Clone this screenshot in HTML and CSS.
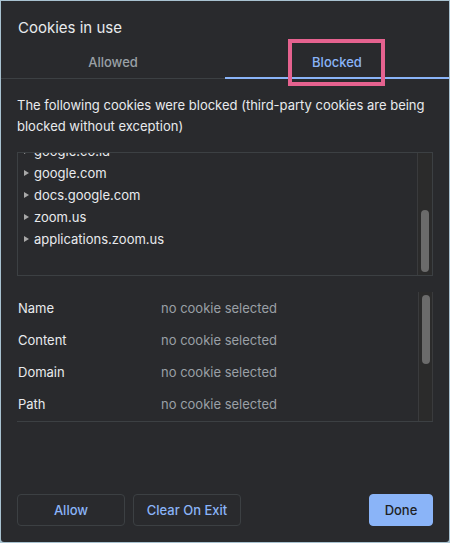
FILE: index.html
```html
<!DOCTYPE html>
<html lang="en">
<head>
    <meta charset="UTF-8">
    <title>Cookies in use</title>
    <link rel="stylesheet" href="styles.css">
</head>
<body>
    <div class="dialog">
        <h1 class="title">Cookies in use</h1>

        <div class="tabs">
            <div class="tab">Allowed</div>
            <div class="tab active">Blocked</div>
        </div>
        <div class="highlight"></div>

        <p class="desc">The following cookies were blocked (third-party cookies are being blocked without exception)</p>

        <div class="tree">
            <div class="tree-list">
                <div class="tree-inner">
                    <div class="node"><span class="arrow"></span>google.co.id</div>
                    <div class="node"><span class="arrow"></span>google.com</div>
                    <div class="node"><span class="arrow"></span>docs.google.com</div>
                    <div class="node"><span class="arrow"></span>zoom.us</div>
                    <div class="node"><span class="arrow"></span>applications.zoom.us</div>
                </div>
            </div>
            <div class="track tree-track"><div class="thumb"></div></div>
        </div>

        <div class="details">
            <div class="detail-rows">
                <div class="row"><span class="label">Name</span><span class="value">no cookie selected</span></div>
                <div class="row"><span class="label">Content</span><span class="value">no cookie selected</span></div>
                <div class="row"><span class="label">Domain</span><span class="value">no cookie selected</span></div>
                <div class="row"><span class="label">Path</span><span class="value">no cookie selected</span></div>
            </div>
            <div class="track details-track"><div class="thumb"></div></div>
        </div>

        <div class="buttons">
            <button class="btn">Allow</button>
            <button class="btn">Clear On Exit</button>
            <button class="btn primary">Done</button>
        </div>
    </div>
</body>
</html>
```

FILE: styles.css
```css
body { margin: 0; background: #a8c2d0; font-family: Inter, "Noto Sans", sans-serif; }
.dialog { position: relative; margin: 1px 1px 0; height: 541px; background: #292a2d; border-radius: 0 0 3px 3px; display: flex; flex-direction: column; color: #e8eaed; }

.title { margin: 17px 0 0 17px; font-size: 15px; line-height: 20px; font-weight: 400; }

.tabs { display: grid; grid-template-columns: 1fr 1fr; align-items: end; margin-top: 9px; }
.tab { text-align: center; font-size: 13px; font-weight: 500; line-height: 20px; padding: 5px 0 6px; color: #9aa0a6; border-bottom: 1px solid #3c4043; }
.tab.active { color: #8ab4f8; padding-bottom: 5px; border-bottom: 2px solid #8ab4f8; }
.highlight { position: absolute; left: 287px; top: 38px; width: 89px; height: 39px; border: 4px solid #e5628f; }

.desc { margin: 16px 16px 0; font-size: 13px; line-height: 21px; }

.tree { display: flex; margin: 15px 16px 0; height: 122px; border: 1px solid #3c4043; }
.tree-list { flex: 1; overflow: hidden; }
.tree-inner { margin-top: -13px; }
.node { height: 22px; line-height: 22px; font-size: 13px; padding-left: 16px; position: relative; }
.arrow { position: absolute; left: 6px; top: 8px; border-left: 5px solid #a8a8a8; border-top: 3.5px solid transparent; border-bottom: 3.5px solid transparent; }

.track { width: 14px; background: #2b2b2b; border-left: 1px solid #3a3b3d; position: relative; }
.thumb { position: absolute; left: 3px; width: 8px; background: #6b6b6b; border-radius: 4px; }
.tree-track .thumb { top: 57px; height: 62px; }

.details { display: flex; margin: 16px 16px 0; border-bottom: 1px solid #3c4043; }
.detail-rows { flex: 1; padding-bottom: 1px; }
.row { display: flex; height: 32px; align-items: center; font-size: 13px; padding-left: 1px; }
.label { width: 143px; color: #e8eaed; }
.value { color: #9aa0a6; }
.details-track { width: 13px; border-right: 1px solid #3a3b3d; }
.details-track .thumb { top: 3px; height: 69px; left: 3px; }

.buttons { margin: auto 16px 16px; display: flex; gap: 8px; }
.btn { height: 32px; width: 108px; background: transparent; border: 1px solid #3c4043; border-radius: 4px; color: #8ab4f8; font-family: inherit; font-size: 13px; font-weight: 500; cursor: pointer; }
.btn.primary { margin-left: auto; width: 64px; background: #8ab4f8; border-color: #8ab4f8; color: #202124; }
```
